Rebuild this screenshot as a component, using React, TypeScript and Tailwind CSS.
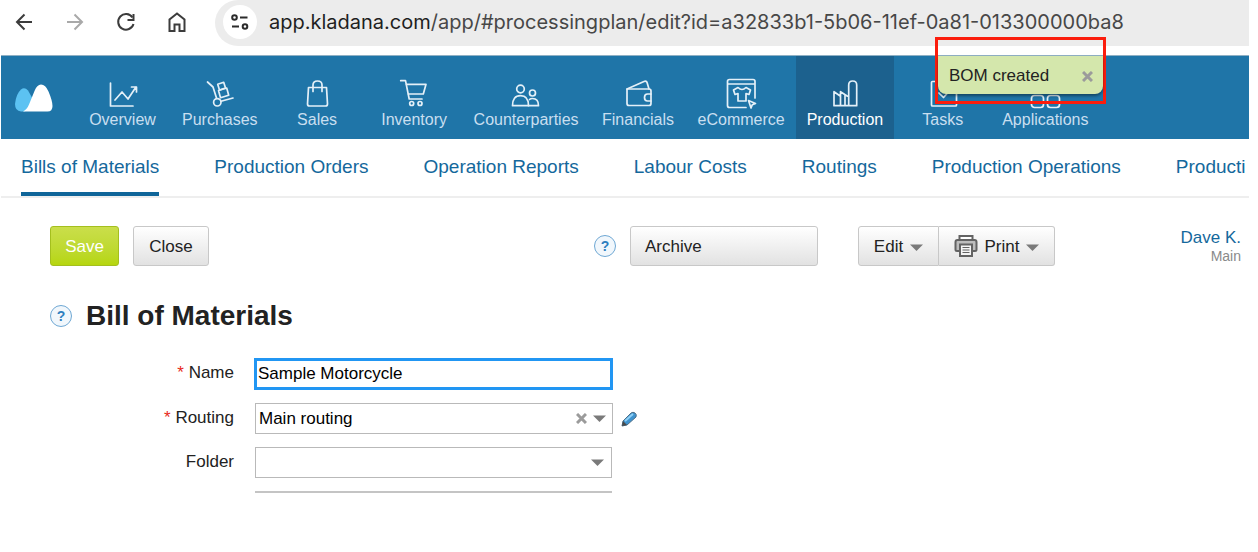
import { useState } from 'react'
import type { ReactNode } from 'react'

const URL_TEXT = 'app.kladana.com/app/#processingplan/edit?id=a32833b1-5b06-11ef-0a81-013300000ba8'

const SECTIONS: { label: string; icon: ReactNode }[] = [
  {
    label: 'Overview',
    icon: (
      <>
        <path d="M3.5 5v23H26" />
        <path d="M8 22l7-8 6 7 8-12M24.5 9H29.500v5" />
      </>
    ),
  },
  {
    label: 'Purchases',
    icon: (
      <>
        <path d="M3.500 4L9 9l3.500 11" />
        <circle cx="13.300" cy="24.300" r="3.700" />
        <path d="M17 23.300L29 20" />
        <path d="M14.500 12.500l8.200-2.500 2 7.200-8.200 2.500z" />
        <path d="M13.700 6.300l6-2 1.800 5.700-6 2z" />
      </>
    ),
  },
  {
    label: 'Sales',
    icon: (
      <>
        <path d="M7.500 9.500h18l1 16.500q0 2-2 2H8.500q-2 0-2-2z" />
        <path d="M12 13.500V7q0-4 4.500-4T21 7v6.500" />
      </>
    ),
  },
  {
    label: 'Inventory',
    icon: (
      <>
        <path d="M2.700 2.700h4.800l3.700 18.300H24" />
        <path d="M8.500 6.300H28L25.300 16H10.500" />
        <circle cx="13.700" cy="25.500" r="2" />
        <circle cx="22" cy="25.500" r="2" />
      </>
    ),
  },
  {
    label: 'Counterparties',
    icon: (
      <>
        <circle cx="10.500" cy="11" r="3.800" />
        <path d="M2.500 27.700q0-10 8-10t8 10z" />
        <circle cx="22.500" cy="15" r="3" />
        <path d="M19.500 21.500q1-1 3-1 6 0 6 7.200H18.500" />
      </>
    ),
  },
  {
    label: 'Financials',
    icon: (
      <>
        <path d="M29 16v-3q0-2-2-2H5v14.500q0 2 2 2h20q2 0 2-2V23" />
        <path d="M5 11L22 3.500q2.500-1 3.200 1.500L27 11" />
        <path d="M29 16h-3.500q-3 0-3 3.500t3 3.500H29z" />
      </>
    ),
  },
  {
    label: 'eCommerce',
    icon: (
      <>
        <path d="M30 20V3.500q0-2-2-2H4.500q-2 0-2 2v24q0 2 2 2H21M2.500 6H30" />
        <path d="M13 9.500L8.500 12l1.500 4.500 3-1v7.500h8v-7.500l3 1 1.500-4.500L21 9.500q-4 4-8 0z" />
        <path d="M23.500 22.500l7 3-3.200 1.300-1.300 3.200z" />
      </>
    ),
  },
  {
    label: 'Production',
    icon: (
      <>
        <path d="M5 27.700V13.700l6.500 4.500v-4.500l7 4.500M11.500 18v9.700M16 17v10.700M5 27.700h22.700V7q0-4-4-4t-4 4v20.700" />
      </>
    ),
  },
  {
    label: 'Tasks',
    icon: (
      <>
        <rect x="4.500" y="3.500" width="25" height="24.500" rx="1" />
        <path d="M12 15l4.500 4.500 9-10" />
      </>
    ),
  },
  {
    label: 'Applications',
    icon: (
      <>
        <rect x="2.500" y="2.500" width="12" height="12" rx="3" />
        <rect x="18.500" y="2.500" width="12" height="12" rx="3" />
        <rect x="2.500" y="17.500" width="12" height="12" rx="3" />
        <rect x="18.500" y="17.500" width="12" height="12" rx="3" />
      </>
    ),
  },
]

const TABS = [
  'Bills of Materials',
  'Production Orders',
  'Operation Reports',
  'Labour Costs',
  'Routings',
  'Production Operations',
  'Producti',
]

function BrowserIcon({ label, muted, children }: { label: string; muted?: boolean; children: ReactNode }) {
  return (
    <button type="button" aria-label={label} className={muted ? 'text-[#a9a9a9]' : 'text-[#3c3c3c]'}>
      <svg className="w-6 h-6" viewBox="0 0 24 24" fill="none" stroke="currentColor" strokeWidth="2">
        {children}
      </svg>
    </button>
  )
}

function HelpButton() {
  return (
    <button
      type="button"
      aria-label="Help"
      className="flex items-center justify-center w-[22px] h-[22px] shrink-0 rounded-full border border-[#6fa8d4] bg-[#f1f7fc] text-sm font-bold text-[#2f7fbf]"
    >
      ?
    </button>
  )
}

function Caret() {
  return (
    <svg className="w-[13px] h-[7px]" viewBox="0 0 13 7" fill="#7a7a7a">
      <path d="M0 .5h13L6.500 7z" />
    </svg>
  )
}

function Cross() {
  return (
    <svg className="w-[11px] h-[11px]" viewBox="0 0 11 11" stroke="#9b9b9b" strokeWidth="3">
      <path d="M1 1l9 9M10 1l-9 9" />
    </svg>
  )
}

function AddressBar() {
  return (
    <div className="flex h-[55px] pl-[11px]">
      <div className="flex items-center gap-[27px] h-11">
        <BrowserIcon label="Back">
          <path d="M20 12H5M12.500 4.500L5 12l7.500 7.500" />
        </BrowserIcon>
        <BrowserIcon label="Forward" muted>
          <path d="M4 12h15M11.500 4.500L19 12l-7.500 7.500" />
        </BrowserIcon>
        <BrowserIcon label="Reload">
          <path d="M18.500 7.500A7.800 7.800 0 1 0 19.500 14" />
          <path d="M19.500 4v6h-6" />
        </BrowserIcon>
        <BrowserIcon label="Home">
          <path d="M4.500 21V9.500L12 3.500l7.500 6V21H14.500v-6.500h-5V21z" />
        </BrowserIcon>
      </div>
      <div className="flex flex-1 items-center h-[46px] ml-[26px] pl-2 pb-0.5 rounded-l-full bg-[#ececec]">
        <button
          type="button"
          aria-label="Site information"
          className="flex items-center justify-center w-[34px] h-[34px] shrink-0 rounded-full bg-white"
        >
          <svg className="w-5 h-5" viewBox="0 0 20 20" fill="none" stroke="#2b2b2b" strokeWidth="2">
            <circle cx="4.500" cy="5.500" r="2.300" />
            <path d="M10 5.500h7.500M2 14.500h7" />
            <circle cx="15" cy="14.500" r="2.300" />
          </svg>
        </button>
        <span className="ml-3 whitespace-nowrap font-['Inter',sans-serif] text-xl text-[#474747]">
          <span className="text-[#1f1f1f]">{URL_TEXT.slice(0, 15)}</span>
          {URL_TEXT.slice(15)}
        </span>
      </div>
    </div>
  )
}

function MainNav() {
  return (
    <nav className="flex h-[84px] pl-[14px] border-t border-[#8fb0c4] bg-[#1f75a8] text-[#c9dff0]">
      <a href="#home" aria-label="Home" className="mt-7 mr-[21px]">
        <svg className="w-[38px] h-7" viewBox="0 0 38 28">
          <path d="M6 27.500Q0 27 0 20 1 10 6 5.500q3.500-3 7 1L19 17 10 27.500z" fill="#5cc2f2" />
          <path d="M8 27.500q4-2 6-7L19.500 7Q22 .5 26 .5q4.500 0 7.500 7Q37.500 17 37.500 22q0 5.500-5 5.500z" fill="#fff" />
        </svg>
      </a>
      {SECTIONS.map(({ label, icon }) => (
        <a
          key={label}
          href={`#${label.toLowerCase()}`}
          className={`flex flex-col items-center min-w-[97px] px-[11px] pt-[22px] text-base leading-5 ${
            label === 'Production' ? 'bg-[#1c618e] text-white' : ''
          }`}
        >
          <svg
            className="w-8 h-8 shrink-0"
            viewBox="0 0 32 32"
            fill="none"
            stroke="#e4f0f8"
            strokeWidth="1.700"
            strokeLinejoin="round"
            strokeLinecap="round"
          >
            {icon}
          </svg>
          {label}
        </a>
      ))}
    </nav>
  )
}

function SubNav() {
  return (
    <nav className="flex gap-[55px] h-[59px] pl-5 overflow-hidden border-b-2 border-[#eeeeee] text-[19px] leading-[56px] whitespace-nowrap text-[#14689c]">
      {TABS.map((tab, i) => (
        <a key={tab} href="#processingplan" className={i === 0 ? 'border-b-4 border-[#0f6599]' : ''}>
          {tab}
        </a>
      ))}
    </nav>
  )
}

function Toolbar() {
  const gray = 'h-10 pt-0.5 border border-[#c8c8c8] bg-linear-to-b from-white to-[#e2e2e2]'
  return (
    <div className="flex items-center pt-7 pl-[49px] pr-2">
      <button
        type="button"
        className="h-10 w-[69px] pt-0.5 rounded-[3px] border border-[#a4bf1e] bg-linear-to-b from-[#cade4a] to-[#b6d60c] text-white"
      >
        Save
      </button>
      <button type="button" className={`${gray} w-[76px] ml-[14px] rounded-[3px]`}>
        Close
      </button>
      <div className="flex flex-1 items-center justify-end">
        <HelpButton />
        <button type="button" className={`${gray} w-[188px] ml-[14px] pl-[14px] rounded-[3px] text-left`}>
          Archive
        </button>
        <button
          type="button"
          className={`${gray} flex items-center justify-center gap-[7px] w-[81px] ml-10 rounded-l-[3px]`}
        >
          Edit <Caret />
        </button>
        <button
          type="button"
          className={`${gray} flex items-center justify-center gap-[7px] w-[116px] border-l-0 rounded-r-[3px]`}
        >
          <svg className="w-6 h-6" viewBox="0 0 24 24" fill="none" stroke="#636363" strokeWidth="2">
            <path d="M5.500 5V1h13v4" fill="#fff" />
            <path d="M6 16H3q-1.500 0-1.500-1.500V7Q1.500 5 3.500 5h17q2 0 2 2v7.500Q22.500 16 21 16h-3" fill="#bdbdbd" />
            <path d="M6 9.500h12V21H6z" fill="#f5f5f5" />
            <path d="M8.500 12.500h7M8.500 15h7M8.500 17.500h7" strokeWidth="1.200" />
          </svg>
          Print <Caret />
        </button>
      </div>
      <div className="w-[186px] text-right">
        <a href="#user" className="block leading-5 text-[#14689c]">
          Dave K.
        </a>
        <div className="text-sm leading-4 text-[#8a8a8a]">Main</div>
      </div>
    </div>
  )
}

function Row({ id, label, required, children }: { id: string; label: string; required?: boolean; children: ReactNode }) {
  return (
    <div className="flex items-center gap-5">
      <label htmlFor={id} className="w-[233px] pb-0.5 shrink-0 text-right">
        {required && <span className="text-[#e8291c]">* </span>}
        {label}
      </label>
      {children}
    </div>
  )
}

function PlanForm() {
  const [name, setName] = useState('Sample Motorcycle')
  const [routing, setRouting] = useState('Main routing')
  const [folder, setFolder] = useState('')

  return (
    <form className="flex flex-col gap-[13px] mt-6">
      <Row id="name" label="Name" required>
        <input
          id="name"
          value={name}
          onChange={(e) => setName(e.target.value)}
          className="w-[359px] h-8 px-px border-3 border-[#2196f3] text-black outline-none"
        />
      </Row>
      <Row id="routing" label="Routing" required>
        <div className="relative w-[358px] h-[31px] ml-px">
          <select
            id="routing"
            value={routing}
            onChange={(e) => setRouting(e.target.value)}
            className="w-full h-full px-[3px] appearance-none border border-[#b9b9b9] bg-white text-black"
          >
            <option value="" />
            <option>Main routing</option>
          </select>
          <div className="absolute inset-y-0 right-[7px] flex items-center gap-[6px]">
            <button type="button" aria-label="Clear routing" onClick={() => setRouting('')}>
              <Cross />
            </button>
            <Caret />
          </div>
        </div>
        <button type="button" aria-label="Edit routing" className="-ml-3">
          <svg className="w-4 h-4" viewBox="0 0 16 16">
            <path d="M1 15l1-5 8-8q2-1.500 4 0t1 4l-9 8z" fill="#3f93cf" stroke="#4d6f88" />
            <path d="M4 10l8-7" stroke="#8fd0f5" strokeWidth="2" />
            <path d="M1 15l1-5 4 4z" fill="#4a4a4a" />
          </svg>
        </button>
      </Row>
      <Row id="folder" label="Folder">
        <div className="relative w-[357px] h-[31px] ml-px">
          <select
            id="folder"
            value={folder}
            onChange={(e) => setFolder(e.target.value)}
            className="w-full h-full px-[3px] appearance-none border border-[#b9b9b9] bg-white text-black"
          >
            <option value="" />
          </select>
          <div className="absolute inset-y-0 right-2 flex items-center">
            <Caret />
          </div>
        </div>
      </Row>
      <div className="w-[357px] ml-[254px] border-t-2 border-[#c4c4c4]" />
    </form>
  )
}

function Toast() {
  const [open, setOpen] = useState(true)
  if (!open) return null
  return (
    <div className="absolute top-[37px] left-[934px] w-[171px] h-[67px] pt-4 border-3 border-[#fb1d0d]">
      <div
        role="status"
        className="flex items-center justify-between h-[38px] pt-0.5 pl-[11px] pr-[10px] rounded-b-lg bg-[#d4e7ac] shadow-[0_2px_3px_rgba(0,0,0,0.4)] text-[#222222]"
      >
        BOM created
        <button type="button" aria-label="Dismiss" onClick={() => setOpen(false)}>
          <Cross />
        </button>
      </div>
    </div>
  )
}

export default function App() {
  return (
    <div className="relative ml-px mr-[9px] overflow-hidden bg-white font-['Liberation_Sans',Arial,sans-serif] text-[17px] leading-6 text-[#222222]">
      <AddressBar />
      <MainNav />
      <SubNav />
      <main>
        <Toolbar />
        <div className="flex items-center gap-[14px] mt-8 pl-[49px]">
          <HelpButton />
          <h1 className="text-[28px] leading-9 font-bold">Bill of Materials</h1>
        </div>
        <PlanForm />
      </main>
      <Toast />
    </div>
  )
}
